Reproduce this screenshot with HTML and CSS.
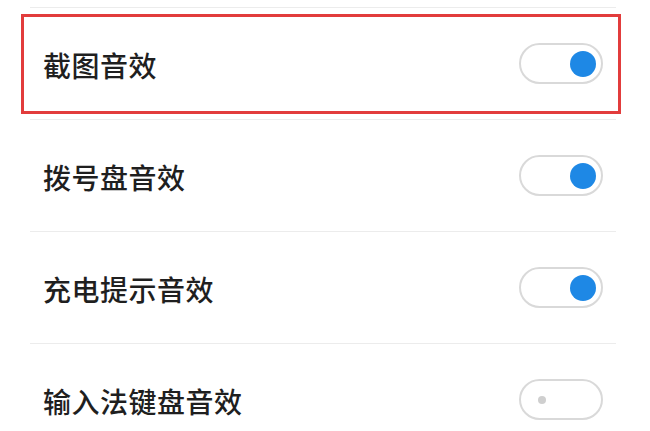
FILE: index.html
```html
<!DOCTYPE html>
<html lang="zh">
<head>
<meta charset="utf-8">
<link rel="stylesheet" href="styles.css">
</head>
<body>
<div class="page">
  <ul class="list">
    <li class="row"><span class="label">截图音效</span><span class="switch on"><span class="knob"></span></span></li>
    <li class="row"><span class="label">拨号盘音效</span><span class="switch on"><span class="knob"></span></span></li>
    <li class="row"><span class="label">充电提示音效</span><span class="switch on"><span class="knob"></span></span></li>
    <li class="row"><span class="label">输入法键盘音效</span><span class="switch off"><span class="knob"></span></span></li>
  </ul>
  <div class="highlight"></div>
</div>
</body>
</html>
```

FILE: styles.css
```css
html, body {
  margin: 0;
  padding: 0;
  background: #ffffff;
}
body {
  font-family: "Noto Sans CJK SC", "Noto Sans", sans-serif;
  color: #1f1f1f;
}
.page {
  position: relative;
  width: 650px;
  height: 431px;
  overflow: hidden;
}
.list {
  list-style: none;
  margin: 0 34px 0 30px;
  padding: 7px 0 0;
}
.row {
  height: 111px;
  border-top: 1px solid #ececec;
  display: flex;
  align-items: center;
  justify-content: space-between;
  padding: 0 13px;
}
.label {
  font-size: 28px;
  font-weight: 500;
  line-height: 1;
  letter-spacing: 0.5px;
  margin-top: 2px;
}
.switch {
  box-sizing: border-box;
  width: 84px;
  height: 41px;
  border: 2px solid #d9d9d9;
  border-radius: 21px;
  display: flex;
  align-items: center;
  background: #fff;
}
.switch.on {
  justify-content: flex-end;
  padding-right: 5px;
}
.switch.on .knob {
  width: 26px;
  height: 26px;
  border-radius: 50%;
  background: #1e88e5;
}
.switch.off {
  justify-content: flex-start;
  padding-left: 17px;
}
.switch.off .knob {
  width: 8px;
  height: 8px;
  border-radius: 50%;
  background: #cfcfcf;
}
.highlight {
  position: absolute;
  left: 21px;
  top: 14px;
  width: 600px;
  height: 100px;
  box-sizing: border-box;
  border: 3px solid #e23c3c;
  pointer-events: none;
}
```
